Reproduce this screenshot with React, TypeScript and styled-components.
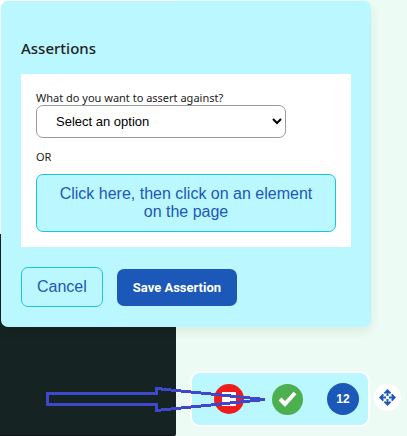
import React from "react";
import styled, { createGlobalStyle } from "styled-components";

const GlobalStyle = createGlobalStyle`
  *, *::before, *::after { box-sizing: border-box; }
  html, body { margin: 0; }
  body { font-family: "Noto Sans", "Open Sans", sans-serif; color: #212121; background: #ecfcf5; }
  button, select { margin: 0; font-family: "Liberation Sans", Arial, sans-serif; }
  button { cursor: pointer; }
`;

const Page = styled.div`
  position: relative;
  min-height: 100vh;
  padding: 1px;
  overflow: hidden;
`;

const Backdrop = styled.div`
  position: absolute;
  inset: 0;
  width: 176px;
  display: flex;
  flex-direction: column;
  background: #fff;
`;

const DarkSection = styled.div`
  margin-top: 234px;
  flex: 1;
  background: #152322;
  border-bottom: 1px solid #11151a;
  border-bottom-right-radius: 2px;
`;

const Card = styled.form`
  position: relative;
  margin-right: 35px;
  padding: 36px 20px 20px;
  border-radius: 7px;
  background: #bbf7ff;
  box-shadow: 0 4px 12px rgba(0, 0, 0, 0.08);
`;

const Title = styled.h1`
  margin: 0 0 15px;
  font-size: 15px;
  line-height: 22px;
  font-weight: 500;
`;

const Panel = styled.div`
  display: flex;
  flex-direction: column;
  align-items: flex-start;
  padding: 16px 15px 15px;
  background: #fff;
`;

const Label = styled.label`
  font-size: 11px;
  line-height: 15px;
`;

const Or = styled.div`
  margin: 11px 0 10px;
  font-size: 11px;
  line-height: 15px;
`;

const Select = styled.select`
  width: 250px;
  max-width: 100%;
  height: 33px;
  padding: 0 0 0 15px;
  border: 1px solid #9b9b9b;
  border-radius: 7px;
  background: #fff;
  color: #000;
  font-size: 13px;
`;

const OutlineButton = styled.button<{ $wide?: boolean }>`
  width: ${(p) => (p.$wide ? "100%" : "auto")};
  padding: 10px 15px;
  border: 1px solid #1cc3dc;
  border-radius: 7px;
  background: #bbf7ff;
  color: #1b58b8;
  font-size: 16px;
  line-height: 18px;
`;

const Actions = styled.div`
  display: flex;
  align-items: center;
  gap: 14px;
  margin-top: 20px;
`;

const SaveButton = styled.button`
  height: 37px;
  padding: 0 16px;
  border: 0;
  border-radius: 7px;
  background: #1b58b8;
  color: #fff;
  font-family: Roboto, "Liberation Sans", sans-serif;
  font-size: 13px;
  font-weight: 700;
`;

const ToolRow = styled.div`
  position: relative;
  display: flex;
  align-items: center;
  justify-content: flex-end;
  gap: 4px;
  margin-top: 44px;
  padding-right: 5px;
`;

const Toolbar = styled.div`
  display: flex;
  align-items: center;
  justify-content: flex-end;
  width: 180px;
  height: 56px;
  padding: 0 9px;
  border: 2px solid #fff;
  border-radius: 10px;
  background: #bbf7ff;
`;

const RoundButton = styled.button<{ $color: string; $size: number }>`
  display: flex;
  align-items: center;
  justify-content: center;
  flex: none;
  width: ${(p) => p.$size}px;
  height: ${(p) => p.$size}px;
  padding: 0;
  border: 0;
  border-radius: 50%;
  background: ${(p) => p.$color};
  color: #fff;
  font-family: "Liberation Sans", Arial, sans-serif;
  font-size: 12px;
  font-weight: 700;
`;

const StopButton = styled(RoundButton)`
  margin-right: 28px;
`;

const AcceptButton = styled(RoundButton)`
  margin-right: 24px;
`;

const MoveButton = styled(RoundButton)`
  margin-bottom: 4px;
`;

const StopMark = styled.span`
  width: 14px;
  height: 14px;
  background: #fff;
`;

const Arrow = styled.svg`
  position: absolute;
  left: 45px;
  top: 385px;
  pointer-events: none;
`;

export default function App() {
  return (
    <>
      <GlobalStyle />
      <Page>
        <Backdrop>
          <DarkSection />
        </Backdrop>
        <Card onSubmit={(e) => e.preventDefault()}>
          <Title>Assertions</Title>
          <Panel>
            <Label htmlFor="target">What do you want to assert against?</Label>
            <Select id="target" defaultValue="">
              <option value="">Select an option</option>
            </Select>
            <Or>OR</Or>
            <OutlineButton type="button" $wide>
              Click here, then click on an element on the page
            </OutlineButton>
          </Panel>
          <Actions>
            <OutlineButton type="button">Cancel</OutlineButton>
            <SaveButton type="submit">Save Assertion</SaveButton>
          </Actions>
        </Card>
        <ToolRow>
          <Toolbar>
            <StopButton $color="#ef1c1c" $size={30} aria-label="Stop">
              <StopMark />
            </StopButton>
            <AcceptButton $color="#4caf50" $size={31} aria-label="Accept">
              <svg width="19" height="16" viewBox="0 0 19 16" fill="none" stroke="#fff" strokeWidth="4">
                <path d="M2 8l5 5L17 2" />
              </svg>
            </AcceptButton>
            <RoundButton $color="#1b58b8" $size={32}>12</RoundButton>
          </Toolbar>
          <MoveButton $color="#fff" $size={27} aria-label="Move">
            <svg width="17" height="17" viewBox="0 0 17 17" fill="#1b58b8">
              <path d="M8.500 0L12.200 3.700L11 5L9.500 3.800V7H7.500V3.800L6 5L4.800 3.700Z" />
              <path d="M8.500 17L12.200 13.300L11 12L9.500 13.200V10H7.500V13.200L6 12L4.800 13.300Z" />
              <path d="M0 8.500L3.700 4.800L5 6L3.800 7.500H7V9.500H3.800L5 11L3.700 12.200Z" />
              <path d="M17 8.500L13.300 4.800L12 6L13.200 7.500H10V9.500H13.200L12 11L13.300 12.200Z" />
            </svg>
          </MoveButton>
        </ToolRow>
        <Arrow width="224" height="30" viewBox="0 0 224 30" fill="none" stroke="#3f48cc" strokeWidth="3" shapeRendering="crispEdges" aria-hidden="true">
          <path d="M2.500 8.500H111.500V3.500L220 14.500L111.500 25.500V19.500H2.500Z" />
        </Arrow>
      </Page>
    </>
  );
}
